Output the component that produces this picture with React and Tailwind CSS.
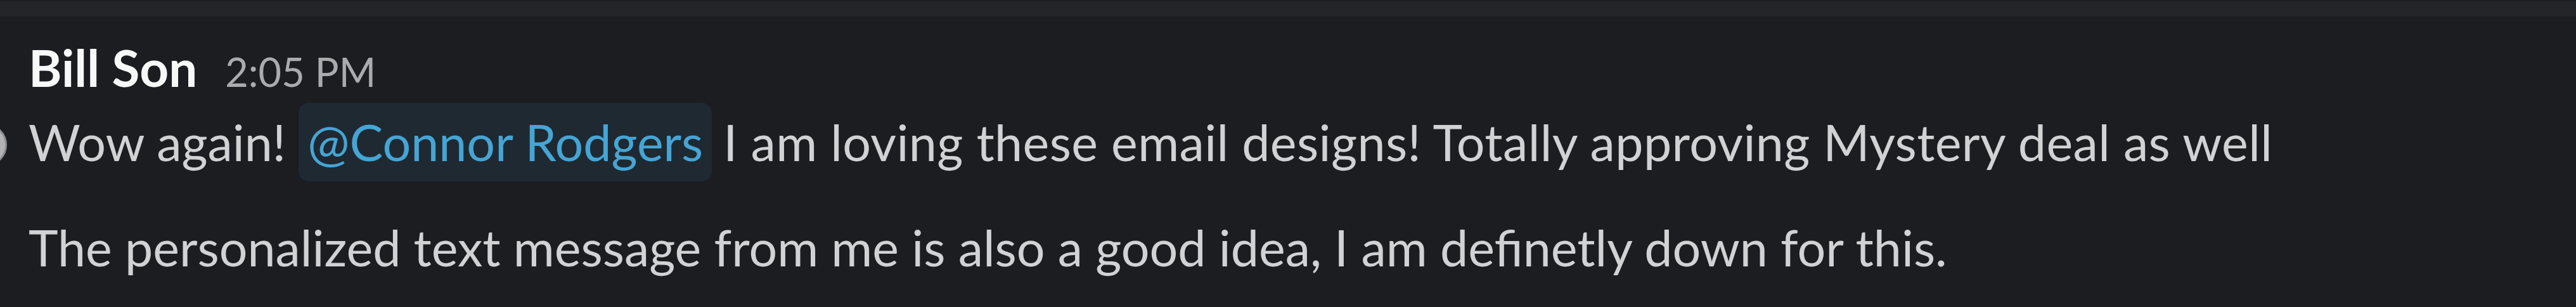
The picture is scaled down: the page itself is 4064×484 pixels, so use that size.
export default function App() {
  return (
    <div
      className="relative w-[4064px] h-[484px] overflow-hidden bg-[#1b1d21] text-[#d1d2d3]"
      style={{ fontFamily: "Lato, 'Noto Sans', sans-serif" }}
    >
      <div className="h-[26px] border-t-2 border-[#1b1d20] bg-[#232529]" />
      <div className="absolute left-[-56px] top-[195px] h-[67px] w-[67px] rounded-full border-[3px] border-[#8e8e90] bg-[#b3b3b5]" />
      <div className="pl-[45px] pt-[22px]">
        <div className="leading-[116px] text-[80px] whitespace-nowrap">
          <span className="font-bold text-[#f8f8f8]">Bill Son</span>
          <span className="ml-[44px] text-[63px] leading-[63px] text-[#ababad]">2:05 PM</span>
        </div>
        <div className="mt-[2px] leading-[116px] text-[79px] whitespace-nowrap">
          Wow again!{" "}
          <span className="mr-[18px] -my-[4px] inline-block rounded-[16px] bg-[#1f2932] px-[14px] py-[4px] text-[#45a5d4]">
            @Connor Rodgers
          </span>
          <span className="tracking-[0.4px]">I am loving these email designs! Totally approving Mystery deal as well</span>
        </div>
        <div className="mt-[50px] leading-[116px] text-[79px] whitespace-nowrap">
          The personalized text message from me is also a good idea, I am definetly down for this.
        </div>
      </div>
    </div>
  );
}
